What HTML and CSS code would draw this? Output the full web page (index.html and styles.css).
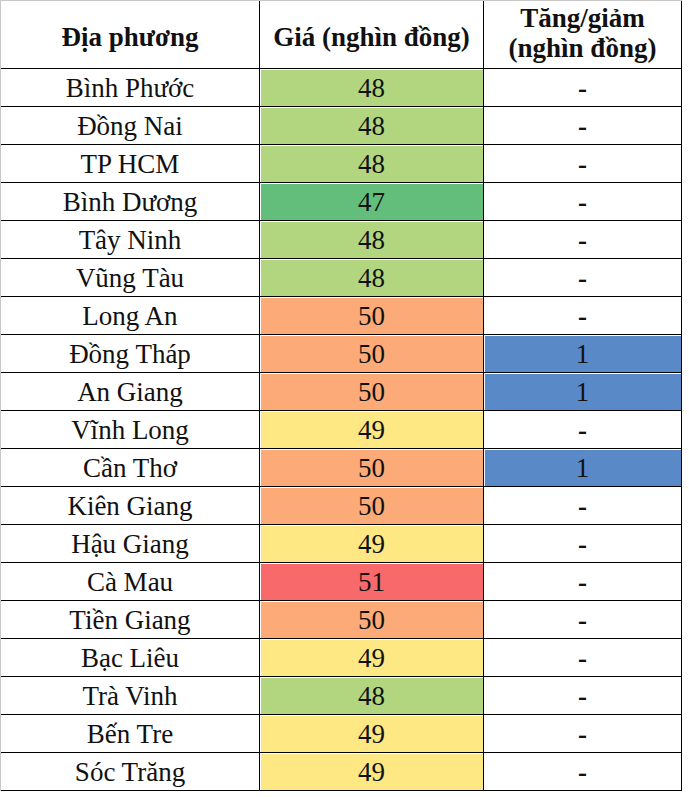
FILE: index.html
```html
<!DOCTYPE html>
<html lang="vi">
<head>
<meta charset="utf-8">
<title>Giá</title>
<link rel="stylesheet" href="styles.css">
</head>
<body>
<table class="price-table">
  <colgroup>
    <col class="c1"><col class="c2"><col class="c3">
  </colgroup>
  <thead>
    <tr>
      <th class="hd">Địa phương</th>
      <th class="hd">Giá (nghìn đồng)</th>
      <th class="hd two">Tăng/giảm<br>(nghìn đồng)</th>
    </tr>
  </thead>
  <tbody>
    <tr><td class="cell">Bình Phước</td><td class="cell p48">48</td><td class="cell dash">-</td></tr>
    <tr><td class="cell">Đồng Nai</td><td class="cell p48">48</td><td class="cell dash">-</td></tr>
    <tr><td class="cell">TP HCM</td><td class="cell p48">48</td><td class="cell dash">-</td></tr>
    <tr><td class="cell">Bình Dương</td><td class="cell p47">47</td><td class="cell dash">-</td></tr>
    <tr><td class="cell">Tây Ninh</td><td class="cell p48">48</td><td class="cell dash">-</td></tr>
    <tr><td class="cell">Vũng Tàu</td><td class="cell p48">48</td><td class="cell dash">-</td></tr>
    <tr><td class="cell">Long An</td><td class="cell p50">50</td><td class="cell dash">-</td></tr>
    <tr><td class="cell">Đồng Tháp</td><td class="cell p50">50</td><td class="cell up">1</td></tr>
    <tr><td class="cell">An Giang</td><td class="cell p50">50</td><td class="cell up">1</td></tr>
    <tr><td class="cell">Vĩnh Long</td><td class="cell p49">49</td><td class="cell dash">-</td></tr>
    <tr><td class="cell">Cần Thơ</td><td class="cell p50">50</td><td class="cell up">1</td></tr>
    <tr><td class="cell">Kiên Giang</td><td class="cell p50">50</td><td class="cell dash">-</td></tr>
    <tr><td class="cell">Hậu Giang</td><td class="cell p49">49</td><td class="cell dash">-</td></tr>
    <tr><td class="cell">Cà Mau</td><td class="cell p51">51</td><td class="cell dash">-</td></tr>
    <tr><td class="cell">Tiền Giang</td><td class="cell p50">50</td><td class="cell dash">-</td></tr>
    <tr><td class="cell">Bạc Liêu</td><td class="cell p49">49</td><td class="cell dash">-</td></tr>
    <tr><td class="cell">Trà Vinh</td><td class="cell p48">48</td><td class="cell dash">-</td></tr>
    <tr><td class="cell">Bến Tre</td><td class="cell p49">49</td><td class="cell dash">-</td></tr>
    <tr><td class="cell">Sóc Trăng</td><td class="cell p49">49</td><td class="cell dash">-</td></tr>
  </tbody>
</table>
</body>
</html>
```

FILE: styles.css
```css
html, body {
  margin: 0;
  padding: 0;
  background: #ffffff;
  font-family: "Liberation Serif", serif;
}

.price-table {
  border-collapse: separate;
  border-spacing: 0;
  table-layout: fixed;
  width: 682px;
  border-top: 1px solid #c8c8c8;
  border-left: 1px solid #c8c8c8;
  color: #111;
  font-family: "Liberation Serif", serif;
}

.c1 { width: 259px; }
.c2 { width: 224px; }
.c3 { width: 198px; }

.hd,
.cell {
  padding: 0;
  text-align: center;
  vertical-align: middle;
  border-right: 1px solid #000;
  border-bottom: 1px solid #000;
}

.hd {
  font-size: 27px;
  font-weight: bold;
  line-height: 30px;
  padding-top: 4px;
  height: 63px;
}

.hd.two {
  padding-top: 0;
  padding-bottom: 3px;
  height: 64px;
}

.cell {
  font-size: 27px;
  line-height: 28px;
  padding-top: 1px;
  height: 36px;
}

.p47, .p48, .p49, .p50, .p51, .up {
  box-shadow: inset 1px 1px 0 #ffffff;
}

.p47 { background: #63be7b; }
.p48 { background: #b2d580; }
.p49 { background: #fee883; }
.p50 { background: #fcaa78; }
.p51 { background: #f8696b; }
.up  { background: #5a89c8; }

.cell.dash {
  font-weight: bold;
}
```
